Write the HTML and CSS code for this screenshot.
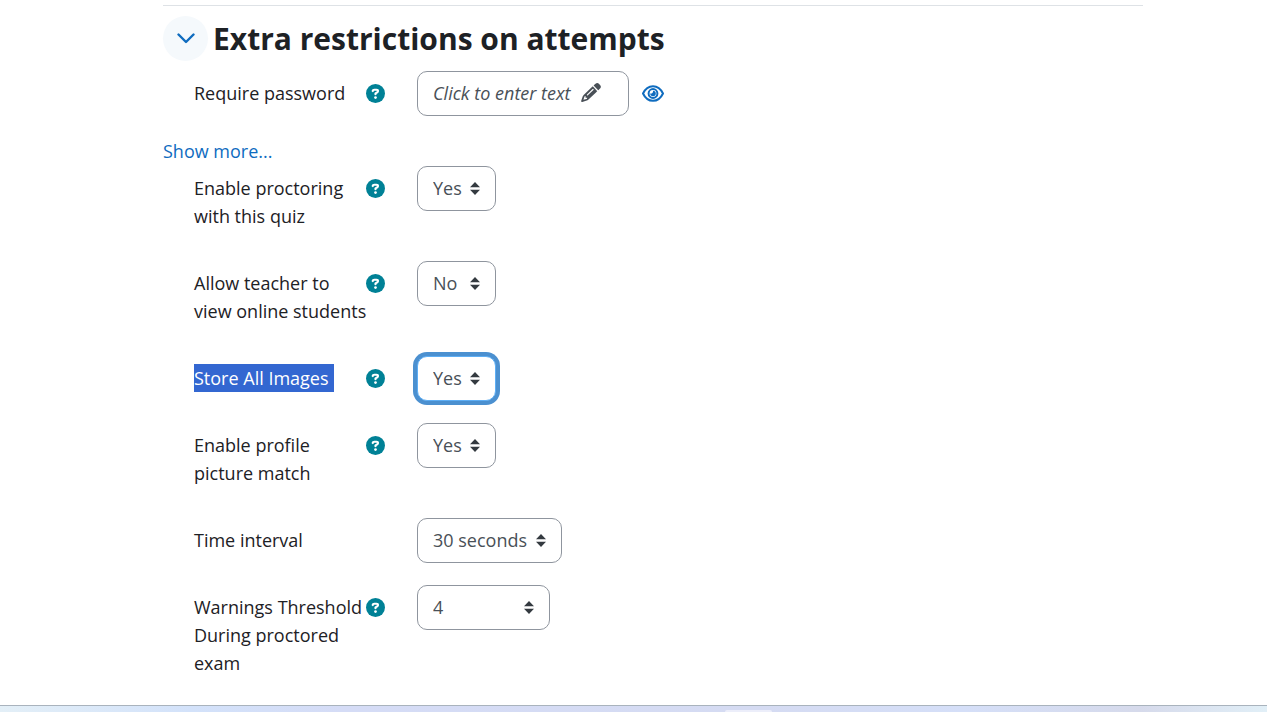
FILE: index.html
```html
<!DOCTYPE html>
<html lang="en">
<head>
<meta charset="utf-8">
<title>Extra restrictions on attempts</title>
<link rel="stylesheet" href="styles.css">
</head>
<body>
<svg class="sprite" aria-hidden="true">
  <symbol id="help" viewBox="0 0 512 512"><circle cx="256" cy="256" r="256"/><path d="M180 190c4-23 20-36 43-36h60c24 0 40 15 40 37 0 15-8 26-21 34l-46 27v25" fill="none" stroke="#fff" stroke-width="58" stroke-linecap="round" stroke-linejoin="round"/><circle cx="256" cy="366" r="36" fill="#fff"/></symbol>
  <symbol id="sort" viewBox="0 0 10 13"><path d="M5 0 10 5.200H0zM0 7.800h10L5 13z"/></symbol>
</svg>
<main class="page">
  <form class="section">
    <header class="section-head">
      <button class="toggle" type="button" aria-label="Collapse" aria-expanded="true">
        <svg viewBox="0 0 18 11" class="chevron"><path d="M1.500 1.500 9 9l7.500-7.500"/></svg>
      </button>
      <h2 class="title">Extra restrictions on attempts</h2>
    </header>

    <div class="row">
      <label class="label" for="password">Require password</label>
      <button class="help" type="button" aria-label="Help with password"><svg><use href="#help"/></svg></button>
      <div class="control">
        <button class="field password" type="button" id="password">Click to enter text
          <svg class="pencil" viewBox="0 0 540 512"><path transform="translate(30 0) skewX(-3)" d="M410.3 231l11.3-11.3-33.9-33.9-62.1-62.1L291.7 89.8l-11.3 11.3-22.6 22.6L58.6 322.9c-10.4 10.4-18 23.3-22.2 37.4L1 480.7c-2.5 8.4-.2 17.5 6.1 23.7s15.3 8.5 23.7 6.1l120.3-35.4c14.1-4.2 27-11.8 37.4-22.2L387.7 253.7 410.3 231zM160 399.4l-9.1 22.7c-4 3.1-8.5 5.4-13.3 6.9L59.4 452l23-78.1c1.4-4.9 3.8-9.4 6.9-13.3l22.7-9.1v32c0 8.8 7.2 16 16 16h32zM362.7 18.7L348.3 33.2 325.7 55.8 314.3 67.1l33.9 33.9 62.1 62.1 33.9 33.9 11.3-11.3 22.6-22.6 14.5-14.5c25-25 25-65.5 0-90.5L453.3 18.7c-25-25-65.5-25-90.5 0zm-47.4 168l-144 144c-6.2 6.2-16.4 6.2-22.6 0s-6.2-16.4 0-22.6l144-144c6.2-6.2 16.4-6.2 22.6 0s6.2 16.4 0 22.6z"/></svg>
        </button>
        <button class="reveal" type="button" aria-label="Reveal password">
          <svg class="eye" viewBox="0 0 22 17"><path d="M1 8.500C3 4.300 6.600 1.200 11 1.200S19 4.300 21 8.500C19 12.700 15.400 15.800 11 15.800S3 12.700 1 8.500z"/><circle cx="11" cy="8.500" r="4.400"/><path class="pupil" d="M11 5.700a2.800 2.800 0 1 1-2.800 2.800c1.700.5 3.300-1.100 2.800-2.800z"/></svg>
        </button>
      </div>
    </div>

    <a class="more" href="#more">Show more...</a>

    <div class="row">
      <label class="label" for="proctoring">Enable proctoring<br>with this quiz</label>
      <button class="help" type="button" aria-label="Help with proctoring"><svg><use href="#help"/></svg></button>
      <div class="control"><div class="select"><select class="field short" id="proctoring"><option>Yes</option><option>No</option></select><svg class="arrows"><use href="#sort"/></svg></div></div>
    </div>
    <div class="row">
      <label class="label" for="teacher">Allow teacher to<br>view online students</label>
      <button class="help" type="button" aria-label="Help with online students"><svg><use href="#help"/></svg></button>
      <div class="control"><div class="select"><select class="field short" id="teacher"><option>No</option><option>Yes</option></select><svg class="arrows"><use href="#sort"/></svg></div></div>
    </div>
    <div class="row">
      <label class="label" for="images"><span class="selected">Store All Images</span></label>
      <button class="help" type="button" aria-label="Help with images"><svg><use href="#help"/></svg></button>
      <div class="control"><div class="select"><select class="field short focused" id="images"><option>Yes</option><option>No</option></select><svg class="arrows"><use href="#sort"/></svg></div></div>
    </div>
    <div class="row">
      <label class="label" for="profile">Enable profile<br>picture match</label>
      <button class="help" type="button" aria-label="Help with profile match"><svg><use href="#help"/></svg></button>
      <div class="control"><div class="select"><select class="field short" id="profile"><option>Yes</option><option>No</option></select><svg class="arrows"><use href="#sort"/></svg></div></div>
    </div>
    <div class="row">
      <label class="label" for="interval">Time interval</label>
      <div class="control"><div class="select"><select class="field long" id="interval"><option>30 seconds</option></select><svg class="arrows"><use href="#sort"/></svg></div></div>
    </div>
    <div class="row">
      <label class="label" for="threshold">Warnings Threshold<br>During proctored<br>exam</label>
      <button class="help" type="button" aria-label="Help with warnings"><svg><use href="#help"/></svg></button>
      <div class="control"><div class="select"><select class="field medium" id="threshold"><option>4</option></select><svg class="arrows"><use href="#sort"/></svg></div></div>
    </div>
  </form>
</main>
<footer class="taskbar"><div class="tab"></div></footer>
</body>
</html>
```

FILE: styles.css
```css
* { box-sizing: border-box; }
body {
  margin: 0;
  min-height: 100vh;
  display: flex;
  flex-direction: column;
  background: #fff;
  color: #1d2125;
  font: 18px/28px "Open Sans", "Noto Sans", sans-serif;
}
button { font: inherit; padding: 0; border: 0; background: none; cursor: pointer; }
svg { display: block; }
.sprite { display: none; }
.page { flex: 1; padding: 5px 124px 0 163px; }
.section { border-top: 1px solid #dee2e6; padding-top: 10px; }
.section-head { display: flex; align-items: center; gap: 5px; margin-bottom: 10px; }
.toggle {
  width: 45px;
  height: 45px;
  border-radius: 50%;
  background: #f5f9fc;
  display: grid;
  place-items: center;
}
.chevron { width: 18px; height: 11px; fill: none; stroke: #0f6cbf; stroke-width: 2.4; stroke-linecap: round; stroke-linejoin: round; }
.title { margin: 0; font-size: 30px; line-height: 40px; font-weight: 700; }

.row {
  display: grid;
  grid-template-columns: 172px 20px 1fr;
  align-items: start;
  padding-left: 31px;
  margin-bottom: 22px;
}
.row:last-child { margin-bottom: 0; }
.label { padding: 8px 0 9px; white-space: nowrap; }
.row:last-child .label { padding-bottom: 0; }
.help { width: 19px; height: 19px; margin-top: 13px; }
.help svg { width: 19px; height: 19px; fill: #008196; }
.control { grid-column: 3; display: flex; align-items: center; gap: 13px; padding-left: 31px; }
.select { position: relative; }
.field {
  display: block;
  height: 45px;
  padding: 0 15px 2px;
  border: 1px solid #8f959e;
  border-radius: 10px;
  background: #fff;
  color: #495057;
  font: inherit;
  appearance: none;
  outline: none;
}
.short { width: 79px; }
.medium { width: 133px; }
.long { width: 145px; }
.focused { border-color: #5eaef4; box-shadow: 0 0 0 4px #4b90d0; }
.arrows { position: absolute; right: 16px; top: 16px; width: 10px; height: 13px; fill: #343a40; pointer-events: none; }
.password { width: 212px; display: flex; align-items: center; gap: 10px; font-style: italic; white-space: nowrap; }
.pencil { flex: none; width: 20px; height: 19px; fill: #495057; }
.reveal { height: 28px; }
.eye { width: 22px; height: 17px; fill: none; stroke: #0f6cbf; stroke-width: 2; }
.eye .pupil { fill: #0f6cbf; stroke: none; }
.more { display: table; margin-top: -1px; margin-bottom: 1px; color: #0f6cbf; text-decoration: none; }
.selected { display: inline-block; padding-right: 5px; background: #3367d1; color: #fff; }

.taskbar {
  height: 7px;
  border-top: 1px solid #a9b3bd;
  background: linear-gradient(90deg, #e3eff7, #d3e2fa 15%, #d5dcf6 27%, #d5dbf2 60%, #d5dff8 76%, #d6daeb 90%, #e1eff7);
  padding-top: 4px;
  padding-left: 57.2%;
}
.tab { width: 47px; height: 2px; border-radius: 2px 2px 0 0; background: #eceefa; }
```
